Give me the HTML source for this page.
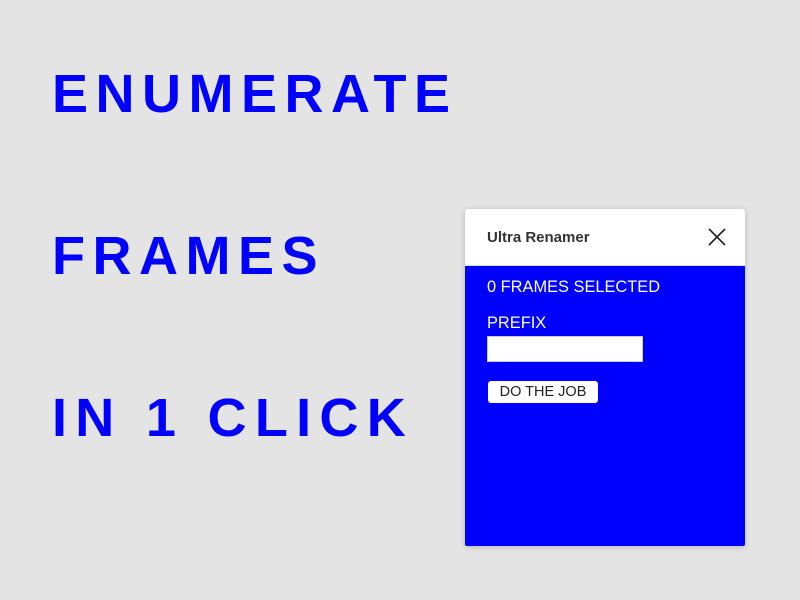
<!DOCTYPE html>
<html><head><style>
body{margin:0;width:800px;height:600px;background:#e4e4e4;position:relative;overflow:hidden;font-family:"Liberation Sans",sans-serif}
.h{position:absolute;left:52px;font-weight:bold;font-size:54px;color:#0000ff;letter-spacing:7.5px;line-height:54px}
.p{position:absolute;left:465px;top:209px;width:280px;height:337px;background:#0000ff;box-shadow:0 1px 6px rgba(0,0,0,.2);border-radius:2px;overflow:hidden}
.hd{height:56px;background:#fff;position:relative;border-bottom:1px solid #ddd}
.t{position:absolute;left:22px;top:20px;font-size:15px;font-weight:bold;color:#333}
.w{position:absolute;color:#fff;font-size:16.4px;left:22px}
.in{position:absolute;left:22px;top:127px;width:154px;height:24px;background:#fff;border:1px solid #ccc}
.b{position:absolute;left:23px;top:172px;width:110px;height:22px;background:#fff;border-radius:3px;font-size:14.5px;color:#222;text-align:center;line-height:23px}
</style></head><body>
<div class="h" style="top:67px">ENUMERATE</div>
<div class="h" style="top:229px">FRAMES</div>
<div class="h" style="top:391px;letter-spacing:8.3px">IN 1 CLICK</div>
<div class="p">
<div class="hd"><div class="t">Ultra Renamer</div>
<svg style="position:absolute;left:243px;top:19px" width="18" height="18"><path d="M1 1L17 17M17 1L1 17" stroke="#222" stroke-width="1.6"/></svg></div>
<div class="w" style="top:69px">0 FRAMES SELECTED</div>
<div class="w" style="top:105px">PREFIX</div>
<div class="in"></div>
<div class="b">DO THE JOB</div>
</div>
</body></html>
